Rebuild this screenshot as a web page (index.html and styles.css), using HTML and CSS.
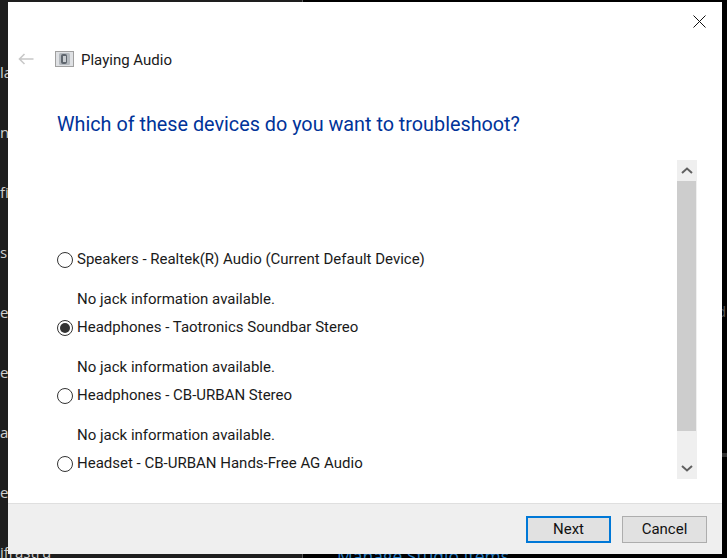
FILE: index.html
```html
<!DOCTYPE html>
<html lang="en">
<head>
<meta charset="utf-8">
<title>Playing Audio</title>
<link rel="stylesheet" href="styles.css">
</head>
<body>
<div class="desktop">
  <div class="behind-left">
    <span class="frag">la</span>
    <span class="frag">nc</span>
    <span class="frag">fi</span>
    <span class="frag">s</span>
    <span class="frag">er</span>
    <span class="frag">er</span>
    <span class="frag">ag</span>
    <span class="frag">ef</span>
    <span class="frag">ifrastru</span>
  </div>
  <span class="behind-link">Manage Studio Items</span>
  <span class="behind-right">d</span>
  <span class="behind-bar"></span>
  <main class="dialog">
    <div class="content">
      <div class="topbar">
        <svg class="close" width="13" height="13" viewBox="0 0 13 13"><path d="M.5.5l12 12M12.5.5l-12 12" stroke="#111" stroke-width="1" fill="none"/></svg>
      </div>
      <header class="titlebar">
        <svg class="back" width="16" height="12" viewBox="0 0 16 12"><path d="M6.500 1 1.500 6l5 5M1.500 6H15.500" fill="none" stroke="#c8c8c8" stroke-width="1.600"/></svg>
        <svg class="appicon" width="19" height="16" viewBox="0 0 19 16"><rect x=".5" y=".5" width="18" height="15" fill="#dfe1e4" stroke="#a0a0a0"/><rect x="4" y="2" width="11" height="12" rx="1.500" fill="#b4b9be"/><rect x="6" y="3" width="6" height="10" rx="2" fill="#5f666e"/><rect x="8" y="5" width="3" height="6" fill="#c9cdd1"/></svg>
        <span class="apptitle">Playing Audio</span>
      </header>
      <h1 class="heading">Which of these devices do you want to troubleshoot?</h1>
      <div class="listwrap">
        <div class="list">
          <div class="device"><span class="radio"></span><span class="name">Speakers - Realtek(R) Audio (Current Default Device)</span></div>
          <div class="jack">No jack information available.</div>
          <div class="device"><span class="radio checked"></span><span class="name">Headphones - Taotronics Soundbar Stereo</span></div>
          <div class="jack">No jack information available.</div>
          <div class="device"><span class="radio"></span><span class="name">Headphones - CB-URBAN Stereo</span></div>
          <div class="jack">No jack information available.</div>
          <div class="device"><span class="radio"></span><span class="name">Headset - CB-URBAN Hands-Free AG Audio</span></div>
        </div>
        <div class="scrollbar">
          <div class="arrow"><svg width="12" height="7" viewBox="0 0 12 7"><path d="M1 6l5-4.500L11 6" fill="none" stroke="#606060" stroke-width="2"/></svg></div>
          <div class="thumb"></div>
          <div class="arrow end"><svg width="12" height="7" viewBox="0 0 12 7"><path d="M1 1l5 4.500L11 1" fill="none" stroke="#606060" stroke-width="2"/></svg></div>
        </div>
      </div>
    </div>
    <footer class="footer">
      <button class="btn primary">Next</button>
      <button class="btn">Cancel</button>
    </footer>
  </main>
</div>
</body>
</html>
```
FILE: styles.css
```css
* { box-sizing: border-box; }
html, body { margin: 0; padding: 0; }
body { background: #000; font-family: Roboto, "Open Sans", sans-serif; font-size: 15px; overflow: hidden; }
.desktop { position: relative; width: 727px; height: 558px; overflow: hidden; background: #000; }
.behind-left { width: 303px; height: 558px; background: #1e1e1e; border-right: 1px solid #555; color: #cfcfcf; display: flex; flex-direction: column; padding-top: 62px; gap: 40px; white-space: nowrap; font-family: "Open Sans", sans-serif; font-size: 15px; line-height: 20px; }
.frag { display: block; }
.behind-link { position: absolute; left: 337px; top: 544px; color: #2b7fc4; font-family: "Open Sans", sans-serif; font-size: 17.500px; }
.behind-right { position: absolute; left: 717px; top: 301px; color: #555; font-family: "Open Sans", sans-serif; font-size: 15px; }
.behind-bar { position: absolute; left: 722px; top: 453px; width: 5px; height: 4px; background: #333; }
.dialog { position: absolute; left: 8px; top: 2px; width: 714px; height: 552px; background: #fff; display: flex; flex-direction: column; }
.content { flex: 1; min-height: 0; display: flex; flex-direction: column; }
.topbar { display: flex; justify-content: flex-end; padding: 13px 16px 0 0; height: 43px; }
.titlebar { display: flex; align-items: center; height: 28px; padding-left: 10px; }
.back { margin-right: 21px; }
.appicon { margin-right: 7px; }
.apptitle { color: #1a1a1a; position: relative; top: 1px; }
.heading { margin: 38px 0 0 49px; font-size: 19.800px; font-weight: 400; color: #003399; line-height: 28px; }
.listwrap { display: flex; margin: 21px 25px 0 49px; height: 319px; justify-content: space-between; }
.list { padding-top: 88px; }
.device { display: flex; align-items: center; height: 24px; color: #1a1a1a; gap: 4px; }
.name { position: relative; top: -1px; }
.jack { margin: 9px 0 0 20px; height: 35px; display: flex; align-items: center; color: #1a1a1a; }
.radio { width: 16px; height: 16px; border: 1px solid #333; border-radius: 50%; background: #fff; display: flex; align-items: center; justify-content: center; }
.radio.checked::before { content: ""; width: 10px; height: 10px; border-radius: 50%; background: #333; }
.scrollbar { width: 20px; background: #efefef; display: flex; flex-direction: column; }
.arrow { height: 21px; display: flex; align-items: center; justify-content: center; }
.arrow.end { flex: 1; align-items: flex-end; padding-bottom: 7px; }
.thumb { width: 19px; height: 250px; background: #cdcdcd; }
.footer { height: 51px; background: #efefef; border-top: 1px solid #dfdfdf; display: flex; justify-content: flex-end; align-items: center; gap: 11px; padding: 0 15px 0 0; }
.btn { width: 85px; height: 27px; background: #e1e1e1; border: 1px solid #adadad; font: inherit; color: #111; padding: 0; }
.btn.primary { border: 2px solid #0078d7; }
```
